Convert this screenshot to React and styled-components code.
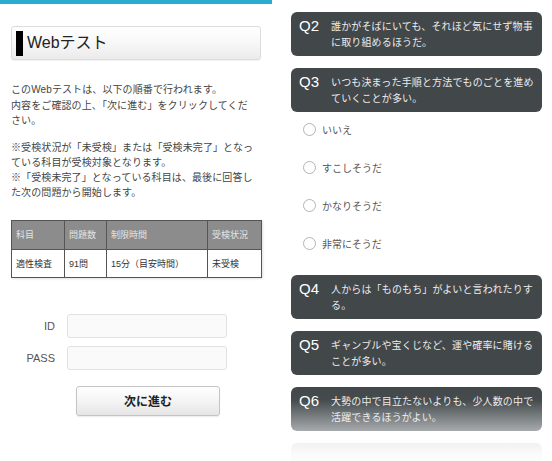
import styled, { createGlobalStyle } from "styled-components"

const GlobalStyle = createGlobalStyle`
  html, body {
    margin: 0;
    padding: 0;
    background: #fff;
  }
  body {
    font-family: "Liberation Sans", "Noto Sans CJK JP", sans-serif;
    color: #444;
  }
  * { box-sizing: border-box; }
`

const questions = [
  { no: "Q2", lines: ["誰かがそばにいても、それほど気にせず物事", "に取り組めるほうだ。"] },
  { no: "Q3", lines: ["いつも決まった手順と方法でものごとを進め", "ていくことが多い。"] },
]

const moreQuestions = [
  { no: "Q4", lines: ["人からは「ものもち」がよいと言われたりす", "る。"] },
  { no: "Q5", lines: ["ギャンブルや宝くじなど、運や確率に賭ける", "ことが多い。"] },
  { no: "Q6", lines: ["大勢の中で目立たないよりも、少人数の中で", "活躍できるほうがよい。"], fade: true },
]

const choices = ["いいえ", "すこしそうだ", "かなりそうだ", "非常にそうだ"]

function Question({ q }) {
  return (
    <QuestionCard $fade={q.fade}>
      <QNo>{q.no}</QNo>
      <QText>
        {q.lines.map((l, i) => (
          <span key={i}>{l}<br /></span>
        ))}
      </QText>
    </QuestionCard>
  )
}

export default function App() {
  return (
    <>
      <GlobalStyle />
      <Page>
        <LeftPanel>
          <TopBar />
          <LeftBody>
            <TitleBox>
              <TitleMark />
              <TitleText>Webテスト</TitleText>
            </TitleBox>

            <Lead $top={22} $lh={15.5}>
              このWebテストは、以下の順番で行われます。<br />
              内容をご確認の上、「次に進む」をクリックしてくだ<br />
              さい。
            </Lead>
            <Lead $top={11} $lh={15.3}>
              ※受検状況が「未受検」または「受検未完了」となっ<br />
              ている科目が受検対象となります。<br />
              ※「受検未完了」となっている科目は、最後に回答し<br />
              た次の問題から開始します。
            </Lead>

            <SubjectTable>
              <colgroup>
                <col style={{ width: 53 }} />
                <col style={{ width: 42 }} />
                <col style={{ width: 101 }} />
                <col style={{ width: 54 }} />
              </colgroup>
              <thead>
                <tr>
                  <th>科目</th>
                  <th>問題数</th>
                  <th>制限時間</th>
                  <th>受検状況</th>
                </tr>
              </thead>
              <tbody>
                <tr>
                  <td>適性検査</td>
                  <td>91問</td>
                  <td>15分（目安時間）</td>
                  <td>未受検</td>
                </tr>
              </tbody>
            </SubjectTable>

            <LoginForm>
              <FieldRow>
                <FieldLabel>ID</FieldLabel>
                <FieldInput type="text" />
              </FieldRow>
              <FieldRow>
                <FieldLabel>PASS</FieldLabel>
                <FieldInput type="password" />
              </FieldRow>
              <NextButton type="button">次に進む</NextButton>
            </LoginForm>
          </LeftBody>
        </LeftPanel>

        <RightPanel>
          <CardStack>
            {questions.map((q) => <Question key={q.no} q={q} />)}
          </CardStack>

          <Choices>
            {choices.map((c) => (
              <Choice key={c}>
                <RadioMark />
                <ChoiceText>{c}</ChoiceText>
              </Choice>
            ))}
          </Choices>

          <CardStack $top={24}>
            {moreQuestions.map((q) => <Question key={q.no} q={q} />)}
            <GhostCard />
          </CardStack>
        </RightPanel>
      </Page>
    </>
  )
}

const Page = styled.div`
  display: flex;
  gap: 4px;
  width: 552px;
  height: 461px;
  overflow: hidden;
`

const LeftPanel = styled.div`
  width: 272px;
  flex-shrink: 0;
`

const TopBar = styled.div`
  height: 4px;
  background: #2aabd0;
`

const LeftBody = styled.div`
  padding: 22px 11px 0 11px;
`

const TitleBox = styled.div`
  height: 34px;
  display: flex;
  align-items: center;
  gap: 4px;
  padding-left: 4px;
  border: 1px solid #dcdcdc;
  border-radius: 3px;
  background: linear-gradient(to bottom, #ffffff 0%, #f7f7f7 50%, #ebebeb 100%);
  box-shadow: 0 1px 1px rgba(0, 0, 0, 0.06);
`

const TitleMark = styled.div`
  width: 7px;
  height: 25px;
  background: #000;
`

const TitleText = styled.h1`
  margin: 0;
  font-size: 16px;
  font-weight: normal;
  color: #222;
  line-height: 1;
`

const Lead = styled.p`
  margin: ${(p) => p.$top}px 0 0 0;
  font-size: 10px;
  letter-spacing: 0.1px;
  line-height: ${(p) => p.$lh}px;
  color: #444;
  white-space: nowrap;
`

const SubjectTable = styled.table`
  margin-top: 19px;
  width: 250px;
  table-layout: fixed;
  border-collapse: collapse;
  box-shadow: 1px 1px 2px rgba(0, 0, 0, 0.12);
  th, td {
    border: 1px solid #555;
    text-align: left;
    padding: 0 0 0 4px;
    font-size: 9px;
    font-weight: normal;
    white-space: nowrap;
  }
  th {
    height: 29px;
    background: #8c8c8c;
    color: #e4e4e4;
  }
  td {
    height: 28px;
    background: #fff;
    color: #333;
  }
`

const LoginForm = styled.div`
  margin-top: 36px;
  display: flex;
  flex-direction: column;
  gap: 8px;
`

const FieldRow = styled.div`
  display: flex;
  align-items: center;
  gap: 12px;
`

const FieldLabel = styled.label`
  width: 44px;
  text-align: right;
  font-size: 11px;
  color: #555;
`

const FieldInput = styled.input`
  width: 160px;
  height: 24px;
  border: 1px solid #e2e2e2;
  border-radius: 3px;
  background: #fafafa;
  outline: none;
`

const NextButton = styled.button`
  margin: 8px 0 0 65px;
  width: 144px;
  height: 30px;
  border: 1px solid #c4c4c4;
  border-radius: 3px;
  background: linear-gradient(to bottom, #ffffff 0%, #f4f4f4 50%, #e6e6e6 100%);
  box-shadow: 0 1px 1px rgba(0, 0, 0, 0.08);
  font-family: "Liberation Sans", "Noto Sans CJK JP", sans-serif;
  font-size: 12px;
  font-weight: bold;
  color: #222;
  cursor: pointer;
`

const RightPanel = styled.div`
  width: 276px;
  flex-shrink: 0;
  padding: 12px 10px 0 15px;
`

const CardStack = styled.div`
  margin-top: ${(p) => p.$top || 0}px;
  display: flex;
  flex-direction: column;
  gap: 12px;
`

const QuestionCard = styled.div`
  height: 44px;
  display: flex;
  padding: 7px 8px 0 8px;
  border-radius: 6px;
  background: ${(p) =>
    p.$fade
      ? "linear-gradient(to bottom, #42474a 0%, #464b4e 30%, #7d8284 70%, #a8abad 100%)"
      : "#42474a"};
`

const QNo = styled.div`
  width: 32px;
  flex-shrink: 0;
  font-size: 15px;
  line-height: 14px;
  color: #fff;
`

const QText = styled.div`
  font-size: 10px;
  letter-spacing: 0.15px;
  line-height: 16px;
  color: #ececec;
  white-space: nowrap;
`

const GhostCard = styled.div`
  height: 30px;
  border-radius: 6px;
  background: linear-gradient(to bottom, #f1f1f1 0%, #fbfbfb 40%, #ffffff 100%);
`

const Choices = styled.div`
  margin-top: 9px;
  padding-left: 12px;
  display: flex;
  flex-direction: column;
  gap: 22px;
`

const Choice = styled.label`
  height: 16px;
  display: flex;
  align-items: center;
  gap: 6px;
`

const RadioMark = styled.span`
  width: 13px;
  height: 13px;
  border-radius: 50%;
  border: 1.5px solid #b4b4b4;
  background: #fff;
`

const ChoiceText = styled.span`
  font-size: 10px;
  color: #555;
`
